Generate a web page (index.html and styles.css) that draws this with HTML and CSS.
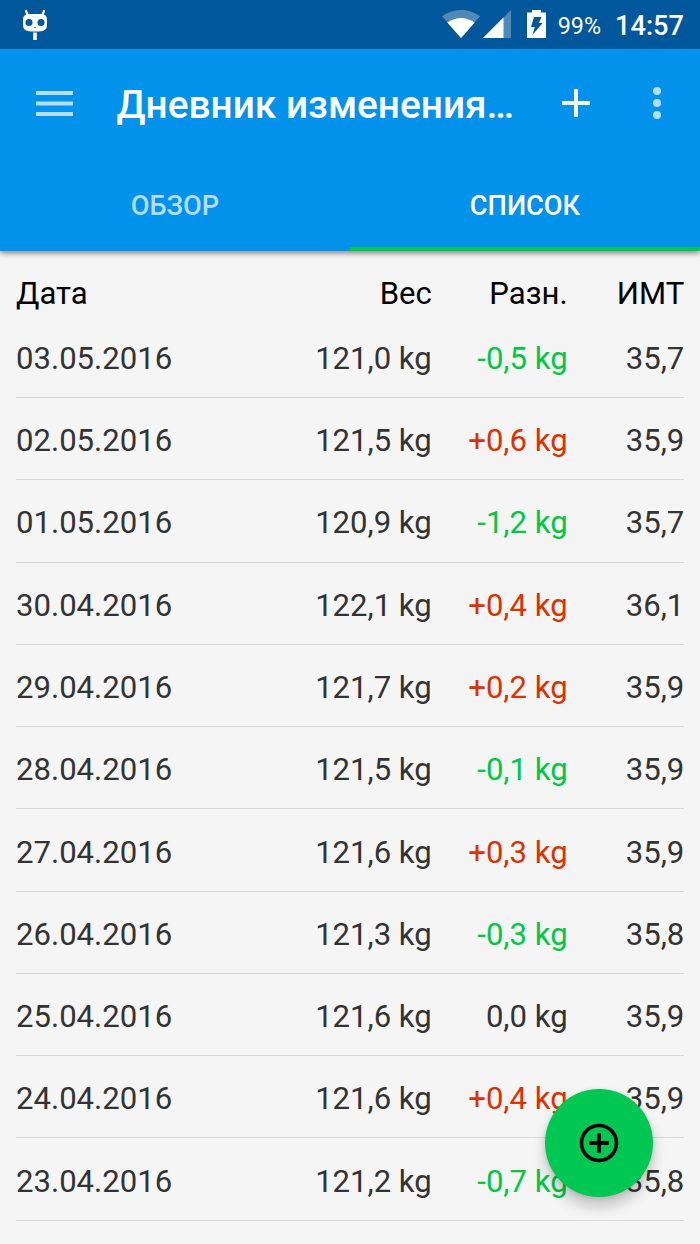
FILE: index.html
```html
<!DOCTYPE html>
<html lang="ru">
<head>
  <meta charset="UTF-8" />
  <meta name="viewport" content="width=device-width, initial-scale=1.0" />
  <title>Дневник изменения веса</title>
  <link rel="stylesheet" href="styles.css">
</head>
<body>
  <!-- Status bar -->
  <div class="status-bar">
    <svg class="cid" width="26" height="32" viewBox="0 0 26 32">
      <path d="M4 2 L5.6 6 M22 2 L20.4 6" stroke="#fff" stroke-width="2.2" stroke-linecap="round" />
      <path d="M7 5 H19 Q25 5 25 10.5 V16 Q25 22.5 17 22.5 H9 Q1 22.5 1 16 V10.5 Q1 5 7 5 Z" fill="#fff" />
      <circle cx="7" cy="13.5" r="3.5" fill="#01579b" />
      <circle cx="19" cy="13.5" r="3.5" fill="#01579b" />
      <path d="M11.8 18 H14.2 L13 19.2 Z" fill="#01579b" />
      <path d="M13 23.5 V31" stroke="#fff" stroke-width="3.6" />
    </svg>
    <div class="status-icons">
      <svg class="wifi" width="38" height="28" viewBox="0 0 38 28">
        <path d="M0 6.3 Q19 -6.6 38 6.3 L19 28 Z" fill="#5089b8" />
        <path d="M5.3 12.4 Q19 3.4 32.7 12.4 L19 28 Z" fill="#fff" />
      </svg>
      <svg class="signal" width="28" height="28" viewBox="0 0 28 28">
        <path d="M0 28 L28 0 V28 Z" fill="#5089b8" />
        <path d="M0 28 L20.5 7.5 V28 Z" fill="#fff" />
      </svg>
      <svg class="battery" width="19" height="28" viewBox="0 0 19 28">
        <path d="M5 0 H14 V2.6 H19 V28 H0 V2.6 H5 Z" fill="#fff" />
        <path d="M7 7 H14.5 L11.8 13 H15.6 L5.4 25 L7.8 17 H4 Z" fill="#01579b" />
      </svg>
      <span class="percent">99%</span>
      <span class="clock">14:57</span>
    </div>
  </div>

  <!-- App bar -->
  <header class="app-bar">
    <div class="toolbar">
      <svg class="menu" width="37" height="25" viewBox="0 0 37 25">
        <path d="M0 2 H37 M0 12.5 H37 M0 23 H37" stroke="#b3ddf9" stroke-width="4" />
      </svg>
      <h1>Дневник изменения…</h1>
      <svg class="add" width="28" height="28" viewBox="0 0 28 28">
        <path d="M0 14 H28 M14 0 V28" stroke="#fff" stroke-width="4" />
      </svg>
      <svg class="more" width="8" height="32" viewBox="0 0 8 32">
        <circle cx="4" cy="4" r="4" fill="#b3ddf9" />
        <circle cx="4" cy="16" r="4" fill="#b3ddf9" />
        <circle cx="4" cy="28" r="4" fill="#b3ddf9" />
      </svg>
    </div>
    <nav class="tabs">
      <a class="tab">ОБЗОР</a>
      <a class="tab active">СПИСОК</a>
    </nav>
  </header>

  <!-- Weight list -->
  <main class="list">
    <div class="row head"><span>Дата</span><span>Вес</span><span>Разн.</span><span>ИМТ</span></div>
    <div class="row"><span>03.05.2016</span><span>121,0 kg</span><span class="down">-0,5 kg</span><span>35,7</span></div>
    <div class="row"><span>02.05.2016</span><span>121,5 kg</span><span class="up">+0,6 kg</span><span>35,9</span></div>
    <div class="row"><span>01.05.2016</span><span>120,9 kg</span><span class="down">-1,2 kg</span><span>35,7</span></div>
    <div class="row"><span>30.04.2016</span><span>122,1 kg</span><span class="up">+0,4 kg</span><span>36,1</span></div>
    <div class="row"><span>29.04.2016</span><span>121,7 kg</span><span class="up">+0,2 kg</span><span>35,9</span></div>
    <div class="row"><span>28.04.2016</span><span>121,5 kg</span><span class="down">-0,1 kg</span><span>35,9</span></div>
    <div class="row"><span>27.04.2016</span><span>121,6 kg</span><span class="up">+0,3 kg</span><span>35,9</span></div>
    <div class="row"><span>26.04.2016</span><span>121,3 kg</span><span class="down">-0,3 kg</span><span>35,8</span></div>
    <div class="row"><span>25.04.2016</span><span>121,6 kg</span><span>0,0 kg</span><span>35,9</span></div>
    <div class="row"><span>24.04.2016</span><span>121,6 kg</span><span class="up">+0,4 kg</span><span>35,9</span></div>
    <div class="row"><span>23.04.2016</span><span>121,2 kg</span><span class="down">-0,7 kg</span><span>35,8</span></div>
  </main>

  <!-- Floating add button -->
  <button class="fab" aria-label="Добавить">
    <svg width="40" height="40" viewBox="0 0 40 40">
      <circle cx="20" cy="20" r="17.5" fill="none" stroke="#000" stroke-width="3.6" />
      <path d="M10.3 20 H29.7 M20 10.3 V29.7" stroke="#000" stroke-width="3.8" />
    </svg>
  </button>
</body>
</html>
```
FILE: styles.css
```css
body {
  font-family: Roboto, sans-serif;
  margin: 0;
  height: 1244px;
  overflow: hidden;
  position: relative;
  background-color: #f5f5f5;
  color: #333;
}
svg {
  display: block;
  flex: none;
}
.status-bar {
  position: relative;
  z-index: 1;
  display: flex;
  justify-content: space-between;
  height: 48.5px;
  box-sizing: border-box;
  padding: 0 16px 0 22px;
  background-color: #01579b;
  color: #fff;
}
.cid {
  margin-top: 9px;
}
.status-icons {
  display: flex;
  align-items: center;
}
.wifi {
  margin-right: 3px;
}
.signal {
  margin-right: 16px;
}
.battery {
  margin-right: 12px;
}
.percent {
  font-size: 23.3px;
  margin-right: 14px;
  padding-top: 3px;
}
.clock {
  font-size: 27.2px;
  font-weight: 500;
  padding-top: 3px;
}
.app-bar {
  position: relative;
  background-color: #0291eb;
  color: #fff;
  box-shadow: 0 2px 6px rgba(0, 0, 0, 0.5);
}
.toolbar {
  display: flex;
  align-items: center;
  height: 109px;
  padding: 0 39px 0 36px;
}
.toolbar h1 {
  flex: none;
  width: 400px;
  margin: 0 45px 0 43.5px;
  padding-top: 3px;
  font-size: 38.8px;
  font-weight: 500;
  white-space: nowrap;
}
.more {
  margin-left: auto;
}
.tabs {
  display: flex;
  height: 93px;
}
.tab {
  flex: 1;
  display: flex;
  align-items: center;
  justify-content: center;
  box-sizing: border-box;
  padding-top: 7px;
  border-bottom: 4px solid transparent;
  font-size: 27.2px;
  font-weight: 500;
  color: #b3ddf9;
}
.tab.active {
  color: #fff;
  border-bottom-color: #00c853;
}
.list {
  padding: 0 16px;
  font-size: 31.1px;
}
.row {
  display: grid;
  grid-template-columns: 200px 215.8px 135.8px 116.7px;
  align-items: center;
  height: 82.28px;
  box-sizing: border-box;
  padding-top: 4px;
  border-bottom: 1px solid #d8d8d8;
}
.row span {
  text-align: right;
}
.row span:first-child {
  text-align: left;
}
.row.head {
  height: 65.3px;
  padding-top: 20px;
  border-bottom: none;
  color: #000;
}
.row .down {
  color: #00c844;
}
.row .up {
  color: #dd3200;
}
.fab {
  position: absolute;
  left: 545px;
  top: 1089px;
  width: 108px;
  height: 108px;
  display: flex;
  align-items: center;
  justify-content: center;
  padding: 0;
  border: none;
  border-radius: 50%;
  background-color: #00c853;
  box-shadow: 0 10px 14px rgba(0, 0, 0, 0.2), 0 1px 5px rgba(0, 0, 0, 0.12);
}
```
